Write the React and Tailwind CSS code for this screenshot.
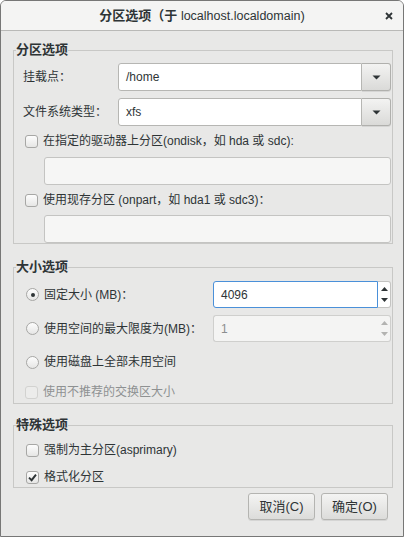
import React from "react";

function Check({ checked = false, disabled = false }) {
  return (
    <span
      className={
        "w-[13px] h-[13px] shrink-0 rounded-[3px] border flex items-center justify-center " +
        (disabled
          ? "border-[#d2d2d0] bg-[#ececeb]"
          : "border-[#a7a7a5] bg-linear-to-b from-[#fdfdfd] to-[#e6e6e5]")
      }
    >
      {checked && (
        <svg width="9" height="9" viewBox="0 0 9 9">
          <path d="M1 4.6 L3.6 7.2 L8 1.6" stroke="#2e3436" strokeWidth="1.9" fill="none" />
        </svg>
      )}
    </span>
  );
}

function Radio({ checked = false }) {
  return (
    <span className="w-[13px] h-[13px] shrink-0 rounded-full border border-[#a7a7a5] bg-linear-to-b from-[#fdfdfd] to-[#e6e6e5] flex items-center justify-center">
      {checked && <span className="w-[4px] h-[4px] rounded-full bg-[#2e3436]" />}
    </span>
  );
}

function Combo({ value }) {
  return (
    <div className="flex-1 flex h-[28px]">
      <div className="flex-1 flex items-center bg-white border border-[#b6b6b3] rounded-l-[3px] pl-[7px] text-[12px]">
        {value}
      </div>
      <div className="w-[29px] flex items-center justify-center border border-l-0 border-[#b0b0ad] rounded-r-[3px] bg-linear-to-b from-[#f3f3f2] to-[#dadad8] shadow-[0_1px_0_rgba(0,0,0,0.08)]">
        <svg width="9" height="5" viewBox="0 0 9 5">
          <path d="M0.5 0.5 H8.5 L4.5 4.5 Z" fill="#2e3436" />
        </svg>
      </div>
    </div>
  );
}

function Spin({ value, disabled = false }) {
  const arrow = disabled ? "#b3b3b1" : "#2e3436";
  return (
    <div className="ml-auto w-[178px] flex h-[27px]">
      <div
        className={
          "flex-1 flex items-center pl-[7px] border rounded-l-[3px] text-[12px] " +
          (disabled
            ? "bg-[#f4f4f3] border-[#cfcfcd] text-[#8b8e8f] border-r-0"
            : "bg-white border-[#4a90d9]")
        }
      >
        {value}
      </div>
      <div
        className={
          "w-[13px] flex flex-col items-center justify-between py-[5px] border border-l-0 rounded-r-[3px] " +
          (disabled ? "bg-[#f4f4f3] border-[#cfcfcd]" : "bg-white border-[#c4c4c2]")
        }
      >
        <svg width="7" height="4" viewBox="0 0 7 4">
          <path d="M0 4 H7 L3.5 0 Z" fill={arrow} />
        </svg>
        <svg width="7" height="4" viewBox="0 0 7 4">
          <path d="M0 0 H7 L3.5 4 Z" fill={arrow} />
        </svg>
      </div>
    </div>
  );
}

function Button({ children }) {
  return (
    <button className="w-[67px] h-[27px] rounded-[3px] border border-[#b4b4b1] bg-linear-to-b from-[#f4f4f3] to-[#dcdcda] shadow-[0_1px_0_rgba(0,0,0,0.08)] text-[13px] text-[#2e3436] flex items-center justify-center">
      {children}
    </button>
  );
}

export default function App() {
  return (
    <div className="w-[405px] h-[537px] bg-white font-['Liberation_Sans','Noto_Sans_CJK_SC',sans-serif] text-[#2e3436] text-[12px]">
      <div className="w-[404px] h-[537px] flex flex-col bg-[#e8e8e7] border border-[#777776] rounded-t-[6px] overflow-hidden">
        {/* title bar */}
        <div className="h-[30px] shrink-0 flex items-center bg-[#f4f4f3] border-b border-[#b9b9b7]">
          <div className="w-[28px]" />
          <div className="flex-1 text-center text-[13px] leading-[16px]">
            <span className="font-bold">分区选项（于 </span>
            <span className="text-[12.5px]">localhost.localdomain</span>
            <span>)</span>
          </div>
          <div className="w-[28px] flex items-center justify-center pr-[1px]">
            <svg width="8" height="8" viewBox="0 0 8 8">
              <path d="M1 1 L7 7 M7 1 L1 7" stroke="#2e3436" strokeWidth="1.8" />
            </svg>
          </div>
        </div>

        {/* content */}
        <div className="flex flex-col pl-[12px] pr-[10px]">
          {/* group 1 */}
          <fieldset className="mt-[11px] border border-[#c8c8c6] px-0 pb-0">
            <legend className="ml-[2px] px-0 text-[13px] font-bold leading-[16px]">分区选项</legend>
            <div className="flex flex-col pt-[5px] pr-[1px]">
              <div className="flex items-center h-[28px]">
                <span className="w-[104px] pl-[9px]">挂载点：</span>
                <Combo value="/home" />
              </div>
              <div className="flex items-center h-[28px] mt-[7px]">
                <span className="w-[104px] pl-[9px]">文件系统类型：</span>
                <Combo value="xfs" />
              </div>
              <div className="flex items-center h-[18px] mt-[6px] pl-[11px] gap-[5px]">
                <Check />
                <span>在指定的驱动器上分区(ondisk，如 hda 或 sdc):</span>
              </div>
              <div className="ml-[30px] mt-[7px] h-[28px] bg-[#f6f6f5] border border-[#c4c4c2] rounded-[3px]" />
              <div className="flex items-center h-[18px] mt-[6px] pl-[11px] gap-[5px]">
                <Check />
                <span>使用现存分区 (onpart，如 hda1 或 sdc3)：</span>
              </div>
              <div className="ml-[30px] mt-[6px] h-[28px] bg-[#f6f6f5] border border-[#c4c4c2] rounded-[3px]" />
            </div>
          </fieldset>

          {/* group 2 */}
          <fieldset className="mt-[15px] border border-[#c8c8c6] px-0 pb-[2px]">
            <legend className="ml-[2px] px-0 text-[13px] font-bold leading-[16px]">大小选项</legend>
            <div className="flex flex-col pt-[6px] pr-[1px]">
              <div className="flex items-center h-[27px] pl-[12px] gap-[5px]">
                <Radio checked />
                <span>固定大小 (MB)：</span>
                <Spin value="4096" />
              </div>
              <div className="flex items-center h-[27px] mt-[7px] pl-[12px] gap-[5px]">
                <Radio />
                <span>使用空间的最大限度为(MB)：</span>
                <Spin value="1" disabled />
              </div>
              <div className="flex items-center h-[18px] mt-[11px] pl-[12px] gap-[5px]">
                <Radio />
                <span>使用磁盘上全部未用空间</span>
              </div>
              <div className="flex items-center h-[18px] mt-[12px] pl-[11px] gap-[5px]">
                <Check disabled />
                <span className="text-[#8e9192]">使用不推荐的交换区大小</span>
              </div>
            </div>
          </fieldset>

          {/* group 3 */}
          <fieldset className="mt-[13px] border border-[#c8c8c6] px-0 pb-[1px]">
            <legend className="ml-[2px] px-0 text-[13px] font-bold leading-[16px]">特殊选项</legend>
            <div className="flex flex-col pt-[8px]">
              <div className="flex items-center h-[18px] pl-[12px] gap-[5px]">
                <Check />
                <span>强制为主分区(asprimary)</span>
              </div>
              <div className="flex items-center h-[18px] mt-[9px] pl-[12px] gap-[5px]">
                <Check checked />
                <span>格式化分区</span>
              </div>
            </div>
          </fieldset>

          {/* buttons */}
          <div className="flex justify-end gap-[6px] mt-[5px] pr-[5px]">
            <Button>取消(C)</Button>
            <Button>确定(O)</Button>
          </div>
        </div>
      </div>
    </div>
  );
}
